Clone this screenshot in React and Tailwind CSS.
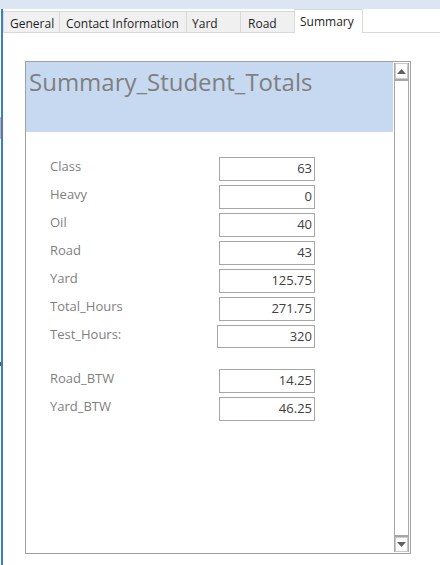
import React from "react";

const rows = [
  ["Class", "63"],
  ["Heavy", "0"],
  ["Oil", "40"],
  ["Road", "43"],
  ["Yard", "125.75"],
  ["Total_Hours", "271.75"],
];

function Row({ label, value, wide }) {
  return (
    <div className="flex h-[28px] items-start">
      <div className="w-[169px] h-[18px] leading-[18px] text-[13px] text-[#7f7f7f]">{label}</div>
      <div
        className={
          (wide ? "w-[98px] -ml-[2px] h-[23px] " : "w-[96px] h-[24px] ") +
          "border border-[#a6a6a6] text-right pr-[2px] text-[13px] leading-[21px] text-[#404040]"
        }
      >
        {value}
      </div>
    </div>
  );
}

function Arrow({ up }) {
  return (
    <svg width="9" height="5" viewBox="0 0 9 5">
      {up ? <path d="M0 5 L4.5 0 L9 5 Z" fill="#606060" /> : <path d="M0 0 L9 0 L4.5 5 Z" fill="#606060" />}
    </svg>
  );
}

export default function App() {
  return (
    <div
      className="w-[440px] h-[565px] bg-white relative overflow-hidden flex flex-col"
      style={{ fontFamily: '"Open Sans", "Noto Sans", sans-serif' }}
    >
      <div className="h-[9px] bg-[#dce6f2] shrink-0" />
      <div className="flex-1 flex flex-col border-l-[2px] border-[#3a80c4] ml-[1px]">
        {/* tabs */}
        <div className="flex h-[24px] items-end">
          <div className="flex h-[22px] bg-[#f0f0f0] border-t border-l border-b border-[#d9d9d9] text-[12px] text-[#1f1f1f]">
            <div className="w-[56px] border-r border-[#d9d9d9] flex items-center pt-[3px] pl-[6px]">General</div>
            <div className="w-[127px] border-r border-[#d9d9d9] flex items-center pt-[3px] pl-[6px]">Contact Information</div>
            <div className="w-[54px] border-r border-[#d9d9d9] flex items-center pt-[3px] pl-[5px]">Yard</div>
            <div className="w-[53px] flex items-center pt-[3px] pl-[7px]">Road</div>
          </div>
          <div className="h-[24px] w-[69px] border border-b-0 border-[#d9d9d9] bg-white flex items-start pt-[3px] pl-[5px] text-[12px] text-[#1f1f1f]">
            Summary
          </div>
          <div className="flex-1 h-[1px] bg-[#d9d9d9]" />
        </div>

        {/* form frame */}
        <div className="mt-[28px] ml-[22px] w-[386px] h-[493px] border border-[#a0a0a0] flex">
          <div className="flex-1 flex flex-col">
            <div className="h-[70px] bg-[#c6d9f0] pl-[3px] pt-[4px] text-[24px] leading-[32px] text-[#7f7f7f]">
              Summary_Student_Totals
            </div>
            <div className="pl-[24px] pt-[25px] flex flex-col">
              {rows.map(([l, v]) => (
                <Row key={l} label={l} value={v} />
              ))}
              <Row label="Test_Hours:" value="320" wide />
              <div className="h-[16px]" />
              <Row label="Road_BTW" value="14.25" />
              <Row label="Yard_BTW" value="46.25" />
            </div>
          </div>
          <div className="w-[15px] my-[1px] mr-[1px] ml-[1px] border-x border-[#a6a6a6] flex flex-col">
            <div className="h-[16px] border border-[#c8c8c8] flex items-center justify-center">
              <Arrow up />
            </div>
            <div className="h-[2px] bg-[#a6a6a6]" />
            <div className="flex-1" />
            <div className="h-[2px] bg-[#a6a6a6]" />
            <div className="h-[15px] border border-[#c8c8c8] flex items-center justify-center">
              <Arrow />
            </div>
          </div>
        </div>
      </div>
      <div className="absolute left-0 top-[117px] w-[1px] h-[22px] bg-[#e0a3a3]" />
      <div className="absolute left-0 top-[362px] w-[1px] h-[4px] bg-[#555]" />
    </div>
  );
}
